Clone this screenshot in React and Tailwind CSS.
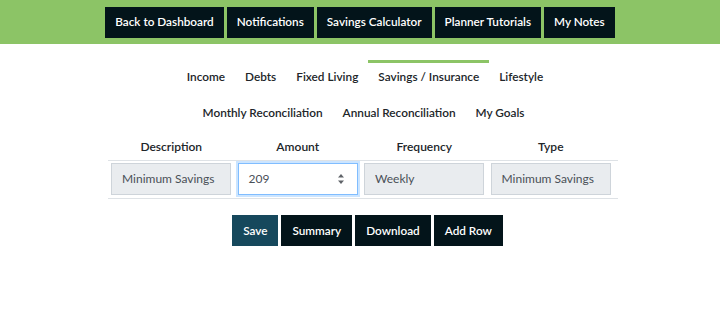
import React from "react";

const navLinks = [
  "Back to Dashboard",
  "Notifications",
  "Savings Calculator",
  "Planner Tutorials",
  "My Notes",
];

const tabsTop = ["Income", "Debts", "Fixed Living", "Savings / Insurance", "Lifestyle"];
const tabsBottom = ["Monthly Reconciliation", "Annual Reconciliation", "My Goals"];

const Tab = ({ label, active }) => (
  <div
    className={
      "border-t-[3px] px-[10px] pt-[4px] pb-[9px] text-[11.8px] font-semibold leading-[20px] text-[#212529] " +
      (active ? "border-[#8cc466]" : "border-transparent")
    }
  >
    {label}
  </div>
);

const Spinner = () => (
  <svg width="8" height="14" viewBox="0 0 8 14" className="shrink-0">
    <path d="M1 5.5 L4 2 L7 5.5 Z" fill="#5f6368" />
    <path d="M1 8.5 L4 12 L7 8.5 Z" fill="#5f6368" />
  </svg>
);

export default function App() {
  return (
    <div
      className="min-h-screen bg-white"
      style={{ fontFamily: "Lato, 'Noto Sans', sans-serif" }}
    >
      {/* top links */}
      <div className="flex h-[44px] items-center justify-center gap-[3px] bg-[#8cc466]">
        {navLinks.map((l) => (
          <div
            key={l}
            className="flex h-[31px] items-center bg-[#03141a] px-[10px] text-[11.75px] font-semibold text-white"
          >
            {l}
          </div>
        ))}
      </div>

      {/* tabs */}
      <div className="mt-[16px] flex justify-center pl-[10px]">
        {tabsTop.map((t) => (
          <Tab key={t} label={t} active={t === "Savings / Insurance"} />
        ))}
      </div>
      <div className="flex justify-center pl-[7px]">
        {tabsBottom.map((t) => (
          <Tab key={t} label={t} />
        ))}
      </div>

      {/* table */}
      <div className="flex justify-center pl-[6px]">
        <div className="w-[510px] text-[12px] text-[#212529]">
          <div className="grid h-[29px] grid-cols-[126.5px_126.5px_126.5px_126.5px_1fr] items-end border-b border-[#dee2e6] pb-[4px] font-semibold">
            <div className="text-center">Description</div>
            <div className="text-center">Amount</div>
            <div className="text-center">Frequency</div>
            <div className="text-center">Type</div>
            <div />
          </div>
          <div className="grid grid-cols-[126.5px_126.5px_126.5px_126.5px_1fr] border-b border-[#dee2e6] pt-[2px] pb-[3px]">
            <div className="pl-[3px]">
              <div className="flex h-[32px] w-[120px] items-center border border-[#ced4da] bg-[#e9ecef] px-[10px] text-[#495057]">
                Minimum Savings
              </div>
            </div>
            <div className="pl-[3px]">
              <div className="flex h-[32px] w-[120px] items-center justify-between border border-[#80bdff] bg-white pr-[12px] pl-[10px] text-[#495057] shadow-[0_0_0_2px_rgba(0,123,255,0.2)]">
                <span>209</span>
                <Spinner />
              </div>
            </div>
            <div className="pl-[3px]">
              <div className="flex h-[32px] w-[120px] items-center border border-[#ced4da] bg-[#e9ecef] px-[10px] text-[#495057]">
                Weekly
              </div>
            </div>
            <div className="pl-[3px]">
              <div className="flex h-[32px] w-[120px] items-center border border-[#ced4da] bg-[#e9ecef] px-[10px] text-[#495057]">
                Minimum Savings
              </div>
            </div>
            <div />
          </div>
        </div>
      </div>

      {/* actions */}
      <div className="mt-[16px] flex justify-center gap-[3px] pl-[15px]">
        <div className="flex h-[31px] items-center bg-[#16485c] px-[11px] text-[11.75px] font-semibold text-white">
          Save
        </div>
        {["Summary", "Download", "Add Row"].map((b) => (
          <div
            key={b}
            className="flex h-[31px] items-center bg-[#03141a] px-[11px] text-[11.75px] font-semibold text-white"
          >
            {b}
          </div>
        ))}
      </div>
    </div>
  );
}
